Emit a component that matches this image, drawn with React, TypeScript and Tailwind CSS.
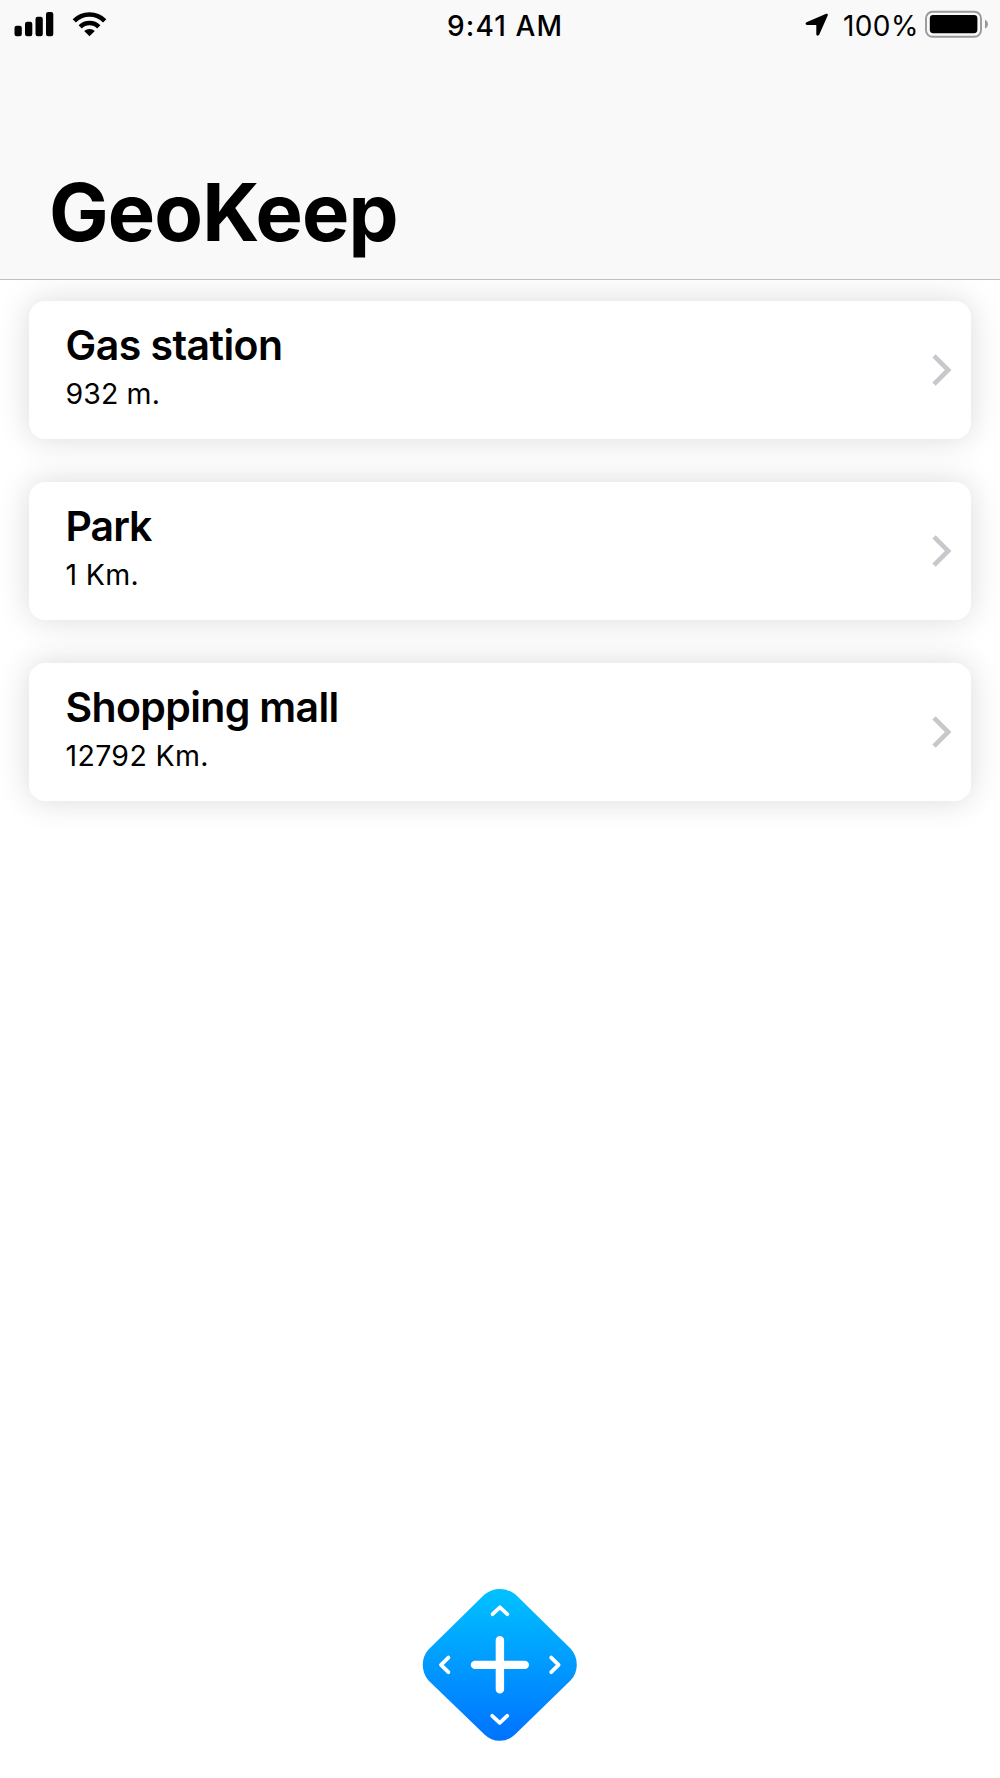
const places = [
  { name: "Gas station", distance: "932 m.", nameSpacing: "tracking-[-0.55px]", distSpacing: "tracking-[0.1px]" },
  { name: "Park", distance: "1 Km.", nameSpacing: "tracking-[-1px]", distSpacing: "tracking-[0.3px]" },
  { name: "Shopping mall", distance: "12792 Km.", nameSpacing: "tracking-[-0.65px]", distSpacing: "tracking-[0.35px]" },
];

function StatusBar() {
  return (
    <div className="flex h-[50px] items-start">
      <svg className="h-[50px] w-[120px]" viewBox="0 0 120 50">
        <rect x="14.5" y="25.7" width="7.3" height="10.6" rx="2.2" />
        <rect x="25" y="21.8" width="7.3" height="14.5" rx="2.2" />
        <rect x="35.5" y="16.8" width="7.3" height="19.5" rx="2.2" />
        <rect x="46" y="12" width="7.3" height="24.3" rx="2.2" />
        <g fill="none" stroke="#000" strokeWidth="4.6">
          <path d="M74.3 20.8A21.6 21.6 0 0 1 104.7 20.8" />
          <path d="M80.2 26.8A13.3 13.3 0 0 1 98.8 26.8" />
        </g>
        <path d="M89.5 36.3L84.2 31.1A7.5 7.5 0 0 1 94.8 31.1Z" />
      </svg>
      <div className="ml-[327px] w-[120px] whitespace-nowrap pt-[6px] text-[28px] leading-[40px] font-medium tracking-[1.15px]">
        9:41 AM
      </div>
      <svg className="ml-[233px] h-[50px] w-[38px]" viewBox="800 0 38 50">
        <path d="M826.2 13.8Q828.5 13.2 827.7 15.6L819.3 34.6Q817.6 37 816.3 34.4V25H807Q804.4 23.9 806.5 22.2Z" />
      </svg>
      <div className="ml-[5px] w-[79px] whitespace-nowrap pt-[6px] text-[28px] leading-[40px] tracking-[0.4px]">
        100%
      </div>
      <svg className="h-[50px] w-[72px]" viewBox="922 0 72 50">
        <rect x="926" y="11.8" width="55" height="25" rx="6.5" fill="none" stroke="#999" strokeWidth="1.9" />
        <rect x="929.8" y="15" width="47.6" height="18.2" rx="3.4" />
        <path d="M985 19.6Q988 21.2 988 24.2T985 28.8Z" fill="#999" />
      </svg>
    </div>
  );
}

function AddButton() {
  const p = "fill-none stroke-white";
  return (
    <button aria-label="Add place" className="block h-[156px] w-[156px]">
      <svg viewBox="422 1587 156 156" className="h-full w-full">
        <defs>
          <linearGradient id="blue" x1="0" y1="0" x2="0" y2="1">
            <stop offset="0" stopColor="#00c2ff" />
            <stop offset="1" stopColor="#0072ff" />
          </linearGradient>
        </defs>
        <path
          fill="url(#blue)"
          d="M484.5 1594.6Q491 1589 499.8 1589Q508.5 1589 515.5 1594.6L570.5 1648.6Q576.8 1655.5 576.8 1664.8Q576.8 1674 570.5 1680.5L515 1734.5Q508.5 1740.8 499.8 1740.8Q491 1740.8 484.5 1734.5L428.5 1680.5Q422.8 1674 422.8 1664.8Q422.8 1656 428.5 1649.5Z"
        />
        <g className={p} strokeWidth="8.4" strokeLinecap="round">
          <path d="M499.9 1640.2V1689.4M475 1664.9H524.8" />
        </g>
        <g className={p} strokeWidth="3.8" strokeLinecap="round" strokeLinejoin="round">
          <path d="M492.5 1614.2L499.9 1607.3L507.3 1614.2" />
          <path d="M492.2 1715.8L499.7 1722.8L507.2 1715.8" />
          <path d="M448.4 1657.6L441 1664.9L448.4 1672.2" />
          <path d="M551.2 1657.6L558.6 1664.9L551.2 1672.2" />
        </g>
      </svg>
    </button>
  );
}

export default function App() {
  return (
    <div className="flex h-[1778px] w-[1000px] flex-col overflow-hidden bg-white font-['Inter',sans-serif] text-black">
      <header className="z-10 h-[280px] border-b border-[#bfbfc0] bg-[#f9f9f9]">
        <StatusBar />
        <h1 className="pt-[114px] pl-[49px] text-[79.5px] leading-[96px] font-bold tracking-[-0.85px]">GeoKeep</h1>
      </header>
      <main className="flex flex-col gap-[43px] px-[29px] pt-[21px]">
        {places.map((place) => (
          <div
            key={place.name}
            className="flex h-[138px] items-center justify-between rounded-[16px] bg-white pr-[19px] pl-[37px] shadow-[0_0_32px_rgba(0,0,0,0.15)]"
          >
            <div className="h-full pt-[19px]">
              <div className={`-ml-[0.5px] text-[41px] leading-[50px] font-semibold ${place.nameSpacing}`}>{place.name}</div>
              <div className={`-ml-[0.5px] pt-[6px] text-[28.5px] leading-[36px] ${place.distSpacing}`}>{place.distance}</div>
            </div>
            <svg className="h-[32px] w-[20px] fill-none stroke-[#c7c7cc]" viewBox="0 0 20 32" strokeWidth="4.6">
              <path d="M2 1.8L16.2 16L2 30.2" />
            </svg>
          </div>
        ))}
      </main>
      <footer className="mt-auto flex justify-center pb-[35px]">
        <AddButton />
      </footer>
    </div>
  );
}
